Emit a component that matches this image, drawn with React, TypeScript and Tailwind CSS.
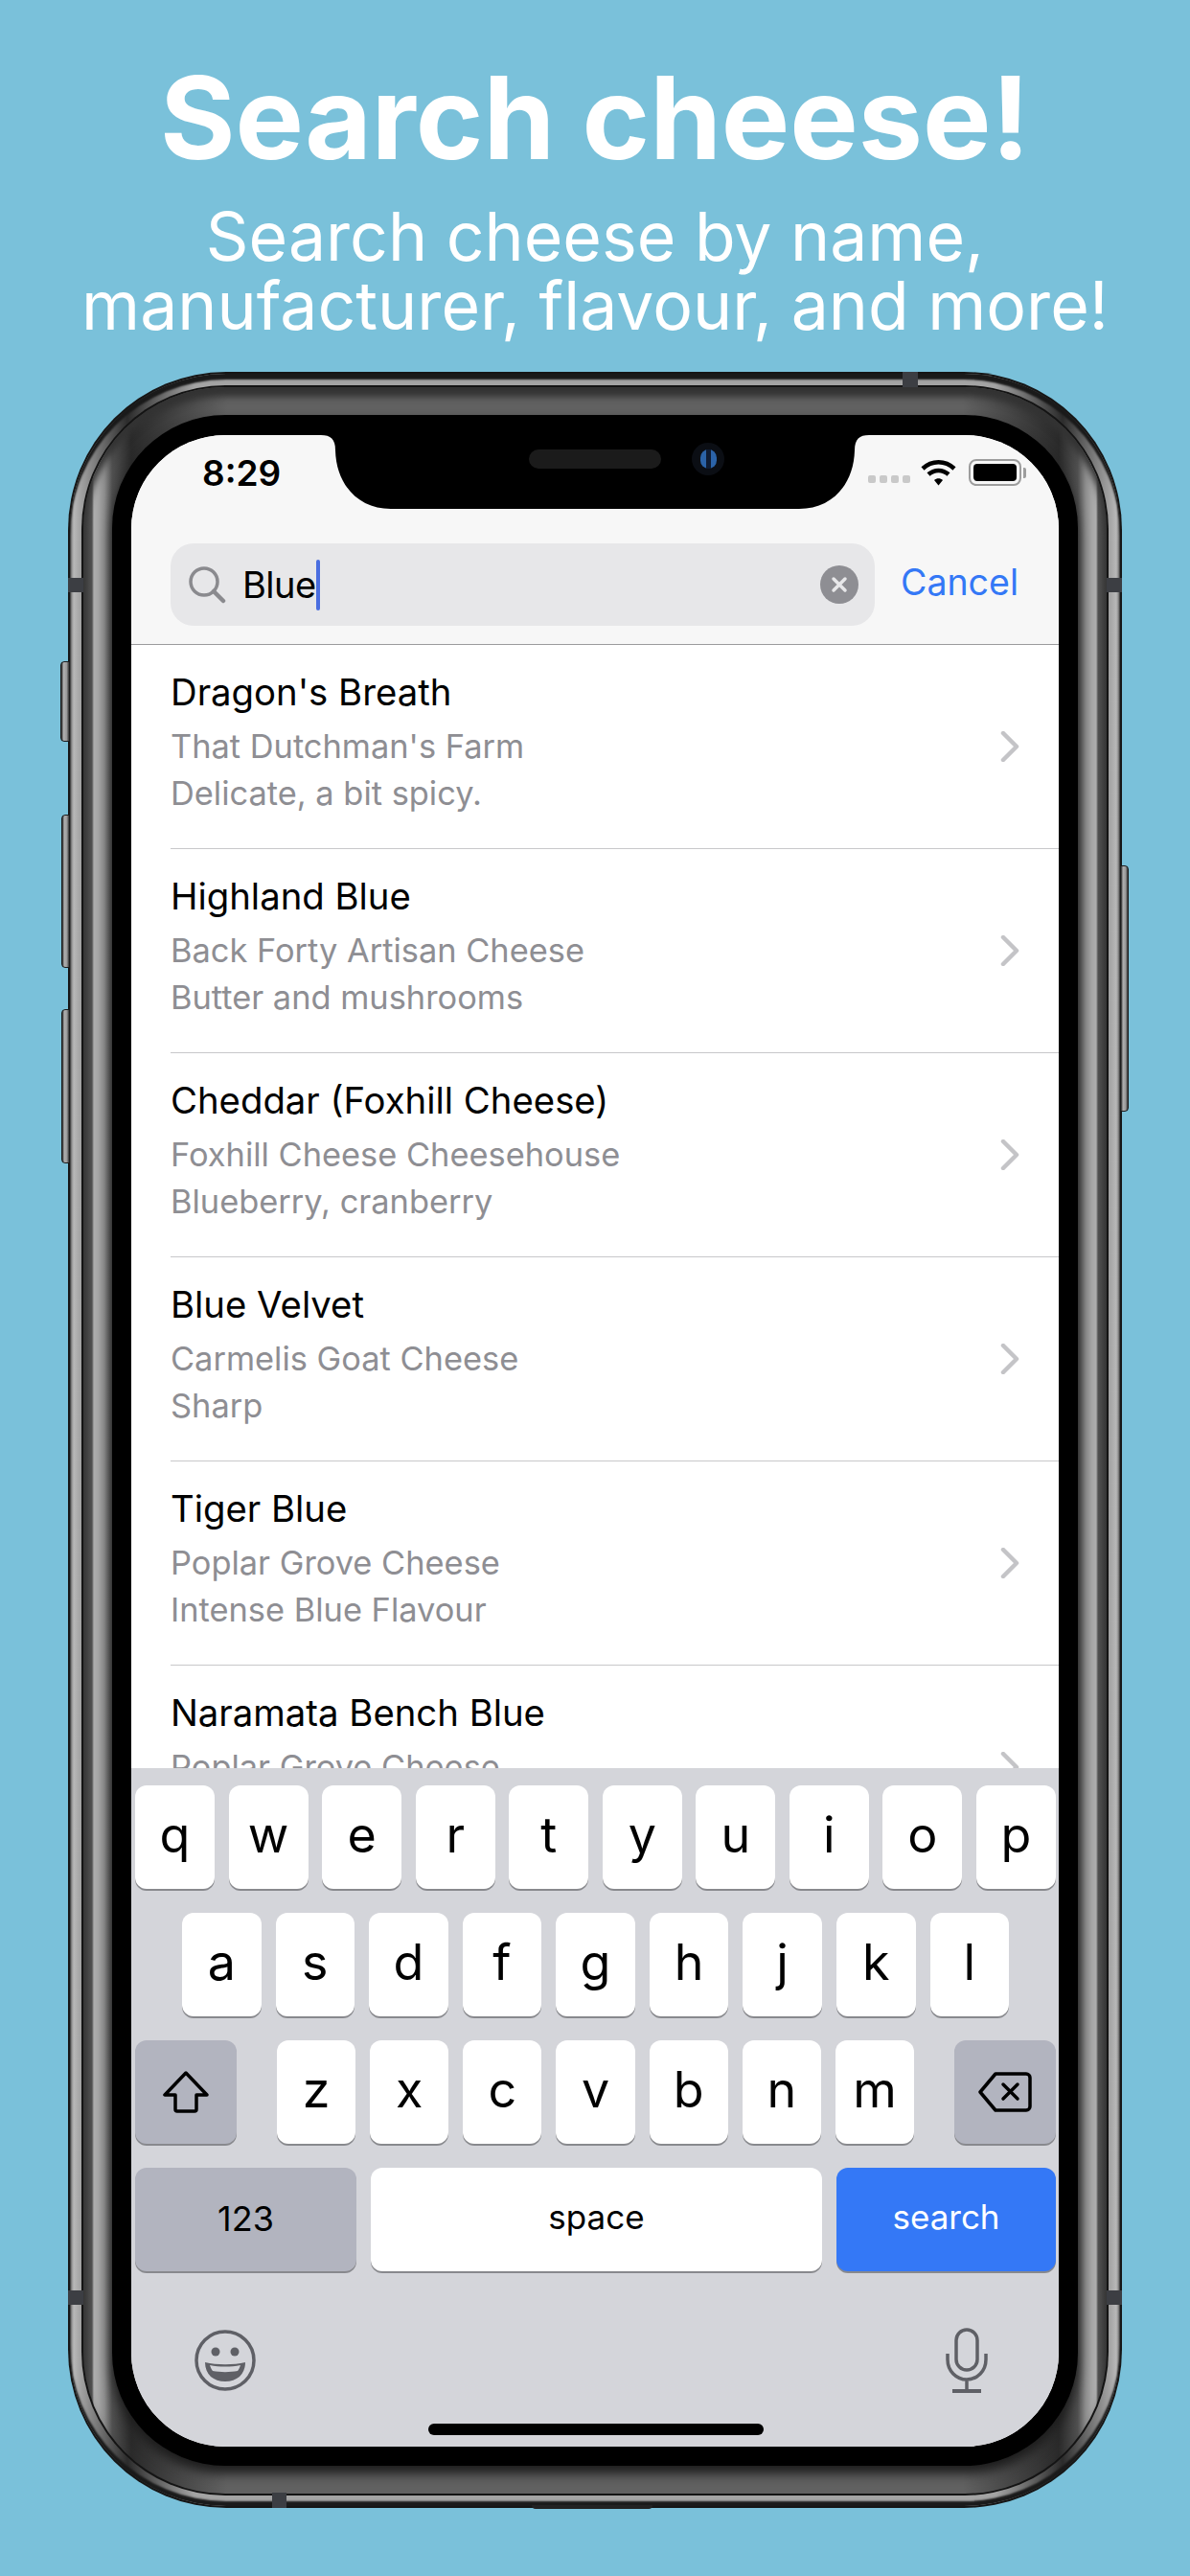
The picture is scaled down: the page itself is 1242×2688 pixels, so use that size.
import React from 'react'

const rows = [
  { name: "Dragon's Breath", maker: "That Dutchman's Farm", note: 'Delicate, a bit spicy.' },
  { name: 'Highland Blue', maker: 'Back Forty Artisan Cheese', note: 'Butter and mushrooms' },
  { name: 'Cheddar (Foxhill Cheese)', maker: 'Foxhill Cheese Cheesehouse', note: 'Blueberry, cranberry' },
  { name: 'Blue Velvet', maker: 'Carmelis Goat Cheese', note: 'Sharp' },
  { name: 'Tiger Blue', maker: 'Poplar Grove Cheese', note: 'Intense Blue Flavour' },
  { name: 'Naramata Bench Blue', maker: 'Poplar Grove Cheese' },
]

const Key = ({ label }: { label: string }) => (
  <div className="flex-1 h-[108px] rounded-[12px] bg-white shadow-[0_2px_0_#88898d] flex items-center justify-center text-[52px] text-black pb-[4px]">
    {label}
  </div>
)

const Row = ({ name, maker, note }: { name: string; maker: string; note?: string }) => (
  <div className="h-[213px] shrink-0 ml-[41px] pr-[41px] border-b border-[#c8c8ca] flex items-center justify-between">
    <div className="self-start pt-[24px]">
      <div className="h-[50px] leading-[50px] text-[38.300px] text-black">{name}</div>
      <div className="mt-[7px] h-[49px] leading-[49px] text-[34.400px] text-[#8e8e93]">{maker}</div>
      {note && <div className="h-[49px] leading-[49px] text-[34.400px] text-[#8e8e93]">{note}</div>}
    </div>
    <svg width="20" height="32" viewBox="0 0 20 32" fill="none" stroke="#c4c4c7" strokeWidth="4.500" strokeLinecap="round" strokeLinejoin="round">
      <path d="M3 2l14 14L3 30" />
    </svg>
  </div>
)

const Mark = ({ className }: { className: string }) => <div className={`absolute bg-[#3c3e43] ${className}`} />

const SideButton = ({ className }: { className: string }) => (
  <div className={`absolute bg-[linear-gradient(90deg,#222_0,#b0b0b0_30%,#999_70%,#333_100%)] border border-[#1c1c1c] ${className}`} />
)

export default function App() {
  return (
    <div className="w-[1242px] h-[2688px] bg-[#7ac1da] overflow-hidden flex flex-col items-center font-['Inter',sans-serif]">
      <div className="h-[388px] w-full shrink-0 flex flex-col items-center text-white pt-[58px]">
        <h1 className="text-[120px] leading-[130px] font-bold">Search cheese!</h1>
        <p className="text-[69.700px] leading-[72px] mt-[23px] text-center">
          Search cheese by name,
          <br />
          manufacturer, flavour, and more!
        </p>
      </div>

      {/* phone body */}
      <div className="relative w-[1100px] shrink-0">
        <SideButton className="left-[-8px] top-[302px] w-[10px] h-[84px] rounded-l-[4px]" />
        <SideButton className="left-[-7px] top-[462px] w-[9px] h-[160px] rounded-l-[4px]" />
        <SideButton className="left-[-7px] top-[665px] w-[9px] h-[161px] rounded-l-[4px]" />
        <SideButton className="right-[-7px] top-[515px] w-[9px] h-[257px] rounded-r-[4px]" />
        <div className="absolute left-[484px] bottom-[-1px] w-[126px] h-[4px] rounded-b-[4px] bg-[#222]" />

        <div className="rounded-[165px] bg-[#161616] p-[2px]">
          <div className="rounded-[163px] p-[12px] pb-[11px] bg-[linear-gradient(90deg,#6a6a6a_0,#b8b8b8_4px,#a0a0a0_12px,#2c2c2c_60px,#a4a4a4_130px,#a4a4a4_calc(100%-130px),#2c2c2c_calc(100%-60px),#a0a0a0_calc(100%-12px),#b8b8b8_calc(100%-4px),#6a6a6a_100%)] shadow-[inset_0_6px_2px_#1a1a1a,inset_0_-5px_2px_#1a1a1a]">
            <div className="rounded-[150px] p-[2px] bg-[#141414]">
              <div className="rounded-[148px] p-[29px] pl-[30px] pr-[30px] bg-[linear-gradient(90deg,#3a3a3a_0,#525252_9px,#aeaeae_11px,#a4a4a4_16px,#8c8c8c_22px,#505050_30px,#2a2a2a_50px,#616161_150px,#616161_calc(100%-150px),#2a2a2a_calc(100%-50px),#505050_calc(100%-30px),#8c8c8c_calc(100%-22px),#a4a4a4_calc(100%-16px),#aeaeae_calc(100%-11px),#525252_calc(100%-9px),#3a3a3a_100%)] shadow-[inset_0_10px_7px_#333]">
                <div className="rounded-[118px] bg-black p-[20px] pt-[21px] shadow-[0_8px_12px_#1c1c1c]">
                  <div className="relative h-[2099px] rounded-[98px] overflow-hidden bg-white flex flex-col">
                    {/* notch */}
                    <svg className="absolute left-0 top-0" width="968" height="80" viewBox="0 0 968 80" fill="#000">
                      <path d="M198 0c10 0 15 4 15 16 1 36 24 61 58 61h426c34 0 57-25 58-61 0-12 5-16 15-16z" />
                    </svg>
                    <div className="absolute left-[415px] top-[15px] w-[138px] h-[20px] rounded-full bg-[#1b1b1b]" />
                    <div className="absolute left-[585px] top-[8px] w-[34px] h-[34px] rounded-full bg-[#0b0e14] flex items-center justify-center">
                      <div className="w-[17px] h-[20px] rounded-full bg-[#2b63a8] flex justify-center">
                        <div className="w-[5px] h-full bg-[#0f1c33]" />
                      </div>
                    </div>

                    <div className="h-[219px] shrink-0 bg-[#f7f7f7] border-b border-[#9b9b9d] flex flex-col">
                      <div className="h-[113px] shrink-0 flex items-start">
                        <span className="ml-[74px] mt-[17px] text-[37px] leading-[46px] font-semibold text-black">8:29</span>
                        <div className="ml-auto mr-[34px] mt-[25px] flex items-end">
                          <div className="flex gap-[4px] mb-[3px] mr-[11px]">
                            <div className="w-[8px] h-[8px] rounded-[2px] bg-[#c9c9c9]" />
                            <div className="w-[8px] h-[8px] rounded-[2px] bg-[#c9c9c9]" />
                            <div className="w-[8px] h-[8px] rounded-[2px] bg-[#c9c9c9]" />
                            <div className="w-[8px] h-[8px] rounded-[2px] bg-[#c9c9c9]" />
                          </div>
                          <svg width="37" height="28" viewBox="0 0 37 28" fill="none" stroke="#000" strokeWidth="4.500">
                            <path d="M2 10c9.500-9 23.500-9 33 0" />
                            <path d="M8 16c6-5.500 15-5.500 21 0" />
                            <path d="M14 22l4.500 5.500L23 22c-2.500-2.500-6.500-2.500-9 0z" fill="#000" stroke="none" />
                          </svg>
                          <div className="ml-[13px] w-[55px] h-[28px] rounded-[8px] border-2 border-[#9d9d9d] p-[3px]">
                            <div className="w-full h-full rounded-[4px] bg-black" />
                          </div>
                          <div className="ml-[2px] mb-[8px] w-[3px] h-[11px] rounded-r-[2px] bg-[#9d9d9d]" />
                        </div>
                      </div>
                      <div className="flex items-start pl-[41px] pr-[42px]">
                        <div className="w-[735px] h-[86px] rounded-[24px] bg-[#e7e7e9] flex items-center">
                          <svg className="ml-[18px]" width="40" height="40" viewBox="0 0 40 40" fill="none" stroke="#8a8a8e" strokeWidth="3.500" strokeLinecap="round">
                            <circle cx="17" cy="17" r="14" />
                            <path d="M27 27l10 10" strokeWidth="4.500" />
                          </svg>
                          <span className="ml-[17px] text-[38px] tracking-[-0.5px] text-black leading-none">Blue</span>
                          <div className="w-[4px] h-[53px] rounded-[2px] bg-[#4a6ee0]" />
                          <div className="ml-auto mr-[17px] w-[40px] h-[40px] rounded-full bg-[#8e8e93] flex items-center justify-center">
                            <svg width="18" height="18" viewBox="0 0 18 18" stroke="#e7e7e9" strokeWidth="3.500" strokeLinecap="round">
                              <path d="M3 3l12 12M15 3L3 15" />
                            </svg>
                          </div>
                        </div>
                        <span className="ml-auto mt-[18px] text-[37.500px] leading-[46px] text-[#3478f6]">Cancel</span>
                      </div>
                    </div>

                    <div className="flex-1 min-h-0 overflow-hidden flex flex-col">
                      {rows.map((r) => (
                        <Row key={r.name} {...r} />
                      ))}
                    </div>

                    {/* keyboard */}
                    <div className="h-[708px] shrink-0 bg-[#d4d5da] pt-[18px] pl-[4px] pr-[3px] flex flex-col gap-[25px]">
                      <div className="flex gap-[14.500px]">
                        {'qwertyuiop'.split('').map((k) => (
                          <Key key={k} label={k} />
                        ))}
                      </div>
                      <div className="flex gap-[15px] px-[49px]">
                        {'asdfghjkl'.split('').map((k) => (
                          <Key key={k} label={k} />
                        ))}
                      </div>
                      <div className="flex">
                        <div className="w-[106px] h-[108px] rounded-[12px] bg-[#b2b4bf] shadow-[0_2px_0_#88898d] flex items-center justify-center">
                          <svg width="48" height="44" viewBox="0 0 48 44" fill="none" stroke="#000" strokeWidth="3.500" strokeLinejoin="round">
                            <path d="M24 2L2 25h11v15a2 2 0 0 0 2 2h18a2 2 0 0 0 2-2V25h11z" />
                          </svg>
                        </div>
                        <div className="flex-1 flex gap-[15px] mx-[42px]">
                          {'zxcvbnm'.split('').map((k) => (
                            <Key key={k} label={k} />
                          ))}
                        </div>
                        <div className="w-[106px] h-[108px] rounded-[12px] bg-[#b2b4bf] shadow-[0_2px_0_#88898d] flex items-center justify-center">
                          <svg width="56" height="42" viewBox="0 0 56 42" fill="none" stroke="#000" strokeWidth="3.500" strokeLinejoin="round">
                            <path d="M18 2h32a4 4 0 0 1 4 4v30a4 4 0 0 1-4 4H18L2 21z" />
                            <path d="M26 13l15 15M41 13L26 28" strokeLinecap="round" />
                          </svg>
                        </div>
                      </div>
                      <div className="flex gap-[15px]">
                        <div className="w-[231px] h-[108px] rounded-[12px] bg-[#b2b4bf] shadow-[0_2px_0_#88898d] flex items-center justify-center text-[36px] text-black pb-[2px]">123</div>
                        <div className="flex-1 h-[108px] rounded-[12px] bg-white shadow-[0_2px_0_#88898d] flex items-center justify-center text-[35px] text-black pb-[5px]">space</div>
                        <div className="w-[229px] h-[108px] rounded-[12px] bg-[#3478f6] shadow-[0_2px_0_#88898d] flex items-center justify-center text-[35px] text-white pb-[5px]">search</div>
                      </div>
                      <div className="flex items-center justify-between pl-[62px] pr-[71px] mt-[34px]">
                        <svg width="64" height="66" viewBox="0 0 64 66" fill="none">
                          <circle cx="32" cy="33" r="30" stroke="#5f6066" strokeWidth="3.500" />
                          <circle cx="22" cy="24" r="4.500" fill="#5f6066" />
                          <circle cx="42" cy="24" r="4.500" fill="#5f6066" />
                          <path d="M11 35c12 3 30 3 42 0 0 13-9 20-21 20s-21-7-21-20z" fill="#5f6066" />
                          <path d="M16 38c10 2 22 2 32 0-1 3-2 5-3 6-8 1.500-18 1.500-26 0-1-1-2-3-3-6z" fill="#d4d5da" />
                        </svg>
                        <svg width="44" height="68" viewBox="0 0 44 68" fill="none" stroke="#5f6066" strokeWidth="3.500">
                          <rect x="11" y="2" width="22" height="42" rx="11" />
                          <path d="M2 27v6c0 12 9 21 20 21s20-9 20-21v-6M22 54v11" />
                          <path d="M7 66h30" strokeWidth="4" />
                        </svg>
                      </div>
                      <div className="w-[350px] h-[12px] mt-[7px] mx-auto rounded-full bg-black" />
                    </div>
                  </div>
                </div>
              </div>
            </div>
          </div>
        </div>

        <Mark className="left-0 top-[215px] w-[16px] h-[15px]" />
        <Mark className="right-0 top-[215px] w-[16px] h-[15px]" />
        <Mark className="left-0 top-[2002px] w-[16px] h-[15px]" />
        <Mark className="right-0 top-[2002px] w-[16px] h-[15px]" />
        <Mark className="left-[871px] top-0 w-[16px] h-[16px]" />
        <Mark className="left-[213px] bottom-0 w-[15px] h-[16px]" />
      </div>
    </div>
  )
}
